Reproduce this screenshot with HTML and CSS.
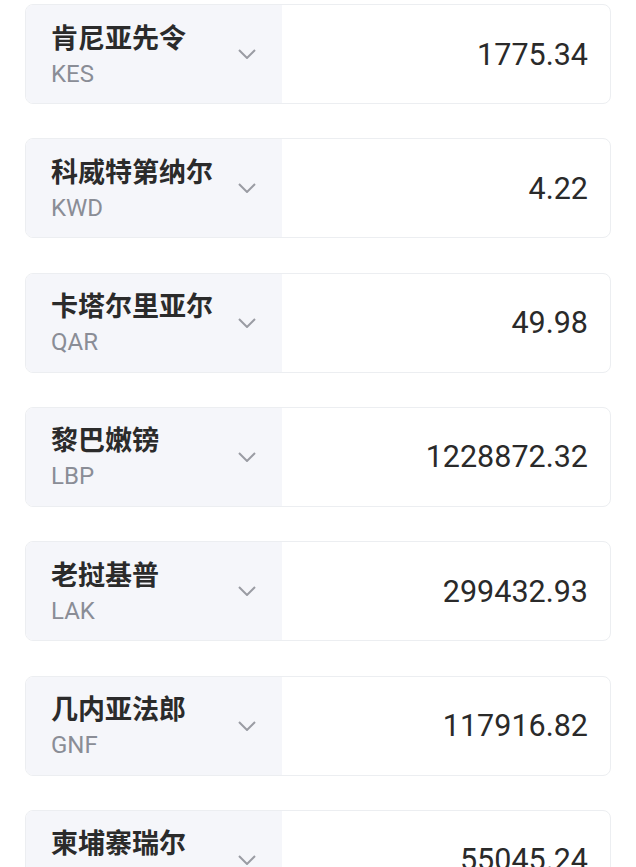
FILE: index.html
```html
<!DOCTYPE html>
<html lang="zh-CN">
<head>
  <meta charset="UTF-8" />
  <meta name="viewport" content="width=device-width, initial-scale=1.0"/>
  <title>汇率换算</title>
  <link rel="stylesheet" href="styles.css">
</head>
<body>

  <div class="list">
    <div class="card">
      <div class="pick">
        <div class="names">
          <div class="name">肯尼亚先令</div>
          <div class="code">KES</div>
        </div>
        <svg class="arrow" width="18" height="10" viewBox="0 0 18 10"><polyline points="1,1 9,9 17,1" /></svg>
      </div>
      <div class="amount">1775.34</div>
    </div>

    <div class="card">
      <div class="pick">
        <div class="names">
          <div class="name">科威特第纳尔</div>
          <div class="code">KWD</div>
        </div>
        <svg class="arrow" width="18" height="10" viewBox="0 0 18 10"><polyline points="1,1 9,9 17,1" /></svg>
      </div>
      <div class="amount">4.22</div>
    </div>

    <div class="card">
      <div class="pick">
        <div class="names">
          <div class="name">卡塔尔里亚尔</div>
          <div class="code">QAR</div>
        </div>
        <svg class="arrow" width="18" height="10" viewBox="0 0 18 10"><polyline points="1,1 9,9 17,1" /></svg>
      </div>
      <div class="amount">49.98</div>
    </div>

    <div class="card">
      <div class="pick">
        <div class="names">
          <div class="name">黎巴嫩镑</div>
          <div class="code">LBP</div>
        </div>
        <svg class="arrow" width="18" height="10" viewBox="0 0 18 10"><polyline points="1,1 9,9 17,1" /></svg>
      </div>
      <div class="amount">1228872.32</div>
    </div>

    <div class="card">
      <div class="pick">
        <div class="names">
          <div class="name">老挝基普</div>
          <div class="code">LAK</div>
        </div>
        <svg class="arrow" width="18" height="10" viewBox="0 0 18 10"><polyline points="1,1 9,9 17,1" /></svg>
      </div>
      <div class="amount">299432.93</div>
    </div>

    <div class="card">
      <div class="pick">
        <div class="names">
          <div class="name">几内亚法郎</div>
          <div class="code">GNF</div>
        </div>
        <svg class="arrow" width="18" height="10" viewBox="0 0 18 10"><polyline points="1,1 9,9 17,1" /></svg>
      </div>
      <div class="amount">117916.82</div>
    </div>

    <div class="card">
      <div class="pick">
        <div class="names">
          <div class="name">柬埔寨瑞尔</div>
          <div class="code">KHR</div>
        </div>
        <svg class="arrow" width="18" height="10" viewBox="0 0 18 10"><polyline points="1,1 9,9 17,1" /></svg>
      </div>
      <div class="amount">55045.24</div>
    </div>
  </div>

</body>
</html>
```

FILE: styles.css
```css
body {
  margin: 0;
  background-color: #fff;
  font-family: Roboto, "Noto Sans CJK SC", sans-serif;
  color: #333;
}

.list {
  display: flex;
  flex-direction: column;
  gap: 34.33px;
  padding: 4px 25px;
}

.card {
  display: flex;
  height: 100px;
  box-sizing: border-box;
  border: 1px solid #eceef1;
  border-radius: 8px;
  overflow: hidden;
  background-color: #fff;
}

.pick {
  display: flex;
  align-items: center;
  justify-content: space-between;
  width: 256px;
  padding: 0 26px 0 25px;
  box-sizing: border-box;
  background-color: #f5f6fa;
}

.names {
  display: flex;
  flex-direction: column;
}

.name {
  font-family: "Noto Sans CJK SC", sans-serif;
  font-size: 27px;
  line-height: 27px;
  font-weight: 700;
  color: #2b2b2b;
}

.code {
  margin-top: 12px;
  font-size: 24px;
  line-height: 24px;
  color: #8a8d96;
}

.arrow polyline {
  fill: none;
  stroke: #9a9ca3;
  stroke-width: 2;
}

.amount {
  flex: 1;
  display: flex;
  align-items: center;
  justify-content: flex-end;
  padding-right: 22px;
  font-size: 30.5px;
  color: #2a2a2a;
}
```
